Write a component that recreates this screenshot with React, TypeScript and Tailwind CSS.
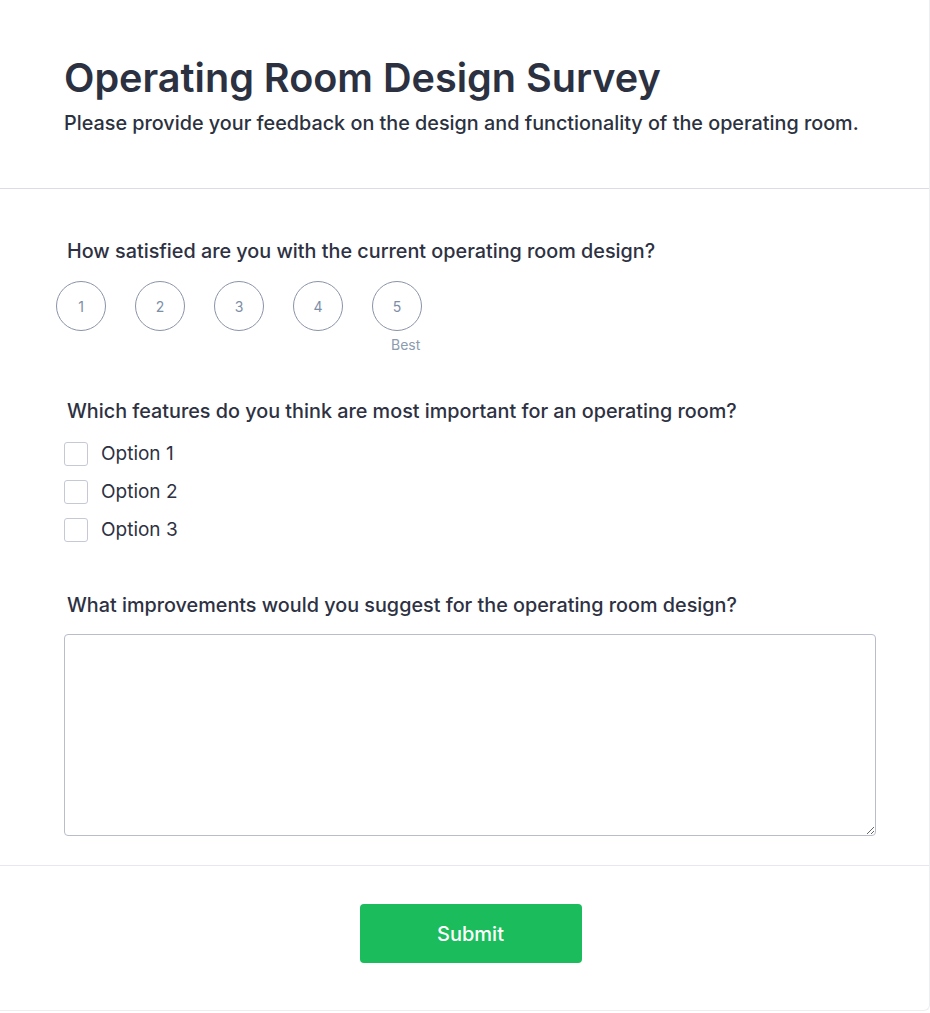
import { useState } from "react";

const font = { fontFamily: "Inter, 'Noto Sans', sans-serif" };

const Rating = () => {
  const [value, setValue] = useState<number | null>(null);
  return (
    <div className="flex gap-[29px] pl-[56px]">
      {[1, 2, 3, 4, 5].map((n) => (
        <div key={n} className="relative flex flex-col items-center">
          <button
            onClick={() => setValue(n)}
            className={`flex h-[50px] w-[50px] items-center justify-center rounded-full border border-[#8a93a8] text-[14px] text-[#7d8ea6] ${
              value === n ? "bg-[#eef1f6]" : "bg-white"
            }`}
          >
            {n}
          </button>
          {n === 5 ? (
            <span className="absolute left-[19px] top-[54px] text-[14px] leading-[20px] text-[#8b9cb0]">Best</span>
          ) : null}
        </div>
      ))}
    </div>
  );
};

export default function App() {
  return (
    <div className="min-h-screen bg-white text-[#2d3142]" style={font}>
      <div className="w-[930px] rounded-br-md border-r border-b border-[#eceef2] bg-white pb-[47px]">
        <header className="border-b border-[#dcdbe8] px-[64px] pt-[53px] pb-[53px]">
          <h1 className="text-[39.6px] font-semibold leading-[50px] text-[#2b3140]">
            Operating Room Design Survey
          </h1>
          <p className="mt-[8px] text-[19.8px] font-medium leading-[24px] text-[#2b3140]">
            Please provide your feedback on the design and functionality of the operating room.
          </p>
        </header>

        <main className="border-b border-[#e8e7f0] pt-[48px] pb-[29px]">
          <section>
            <h2 className="pl-[67px] text-[19.8px] font-medium leading-[28px]">
              How satisfied are you with the current operating room design?
            </h2>
            <div className="mt-[16px]">
              <Rating />
            </div>
          </section>

          <section className="mt-[66px] pl-[64px]">
            <h2 className="pl-[3px] text-[19.8px] font-medium leading-[28px]">
              Which features do you think are most important for an operating room?
            </h2>
            <div className="mt-[17px] flex flex-col gap-[14px]">
              {["Option 1", "Option 2", "Option 3"].map((o) => (
                <label key={o} className="flex items-center gap-[13px] text-[19px] leading-[24px]">
                  <input
                    type="checkbox"
                    className="h-[24px] w-[24px] appearance-none rounded-[3px] border border-[#c5c9d6] bg-white"
                  />
                  {o}
                </label>
              ))}
            </div>
          </section>

          <section className="mt-[49px] pl-[64px]">
            <h2 className="pl-[3px] text-[19.8px] font-medium leading-[28px]">
              What improvements would you suggest for the operating room design?
            </h2>
            <textarea className="mt-[15px] block h-[202px] w-[812px] rounded-[4px] border border-[#b9bccb] bg-white p-3 text-[16px] outline-none" />
          </section>
        </main>

        <div className="flex justify-center pt-[38px] pl-[12px]">
          <button className="h-[59px] w-[222px] rounded-[4px] bg-[#1abc5c] text-[20px] font-medium text-white">
            Submit
          </button>
        </div>
      </div>
    </div>
  );
}
